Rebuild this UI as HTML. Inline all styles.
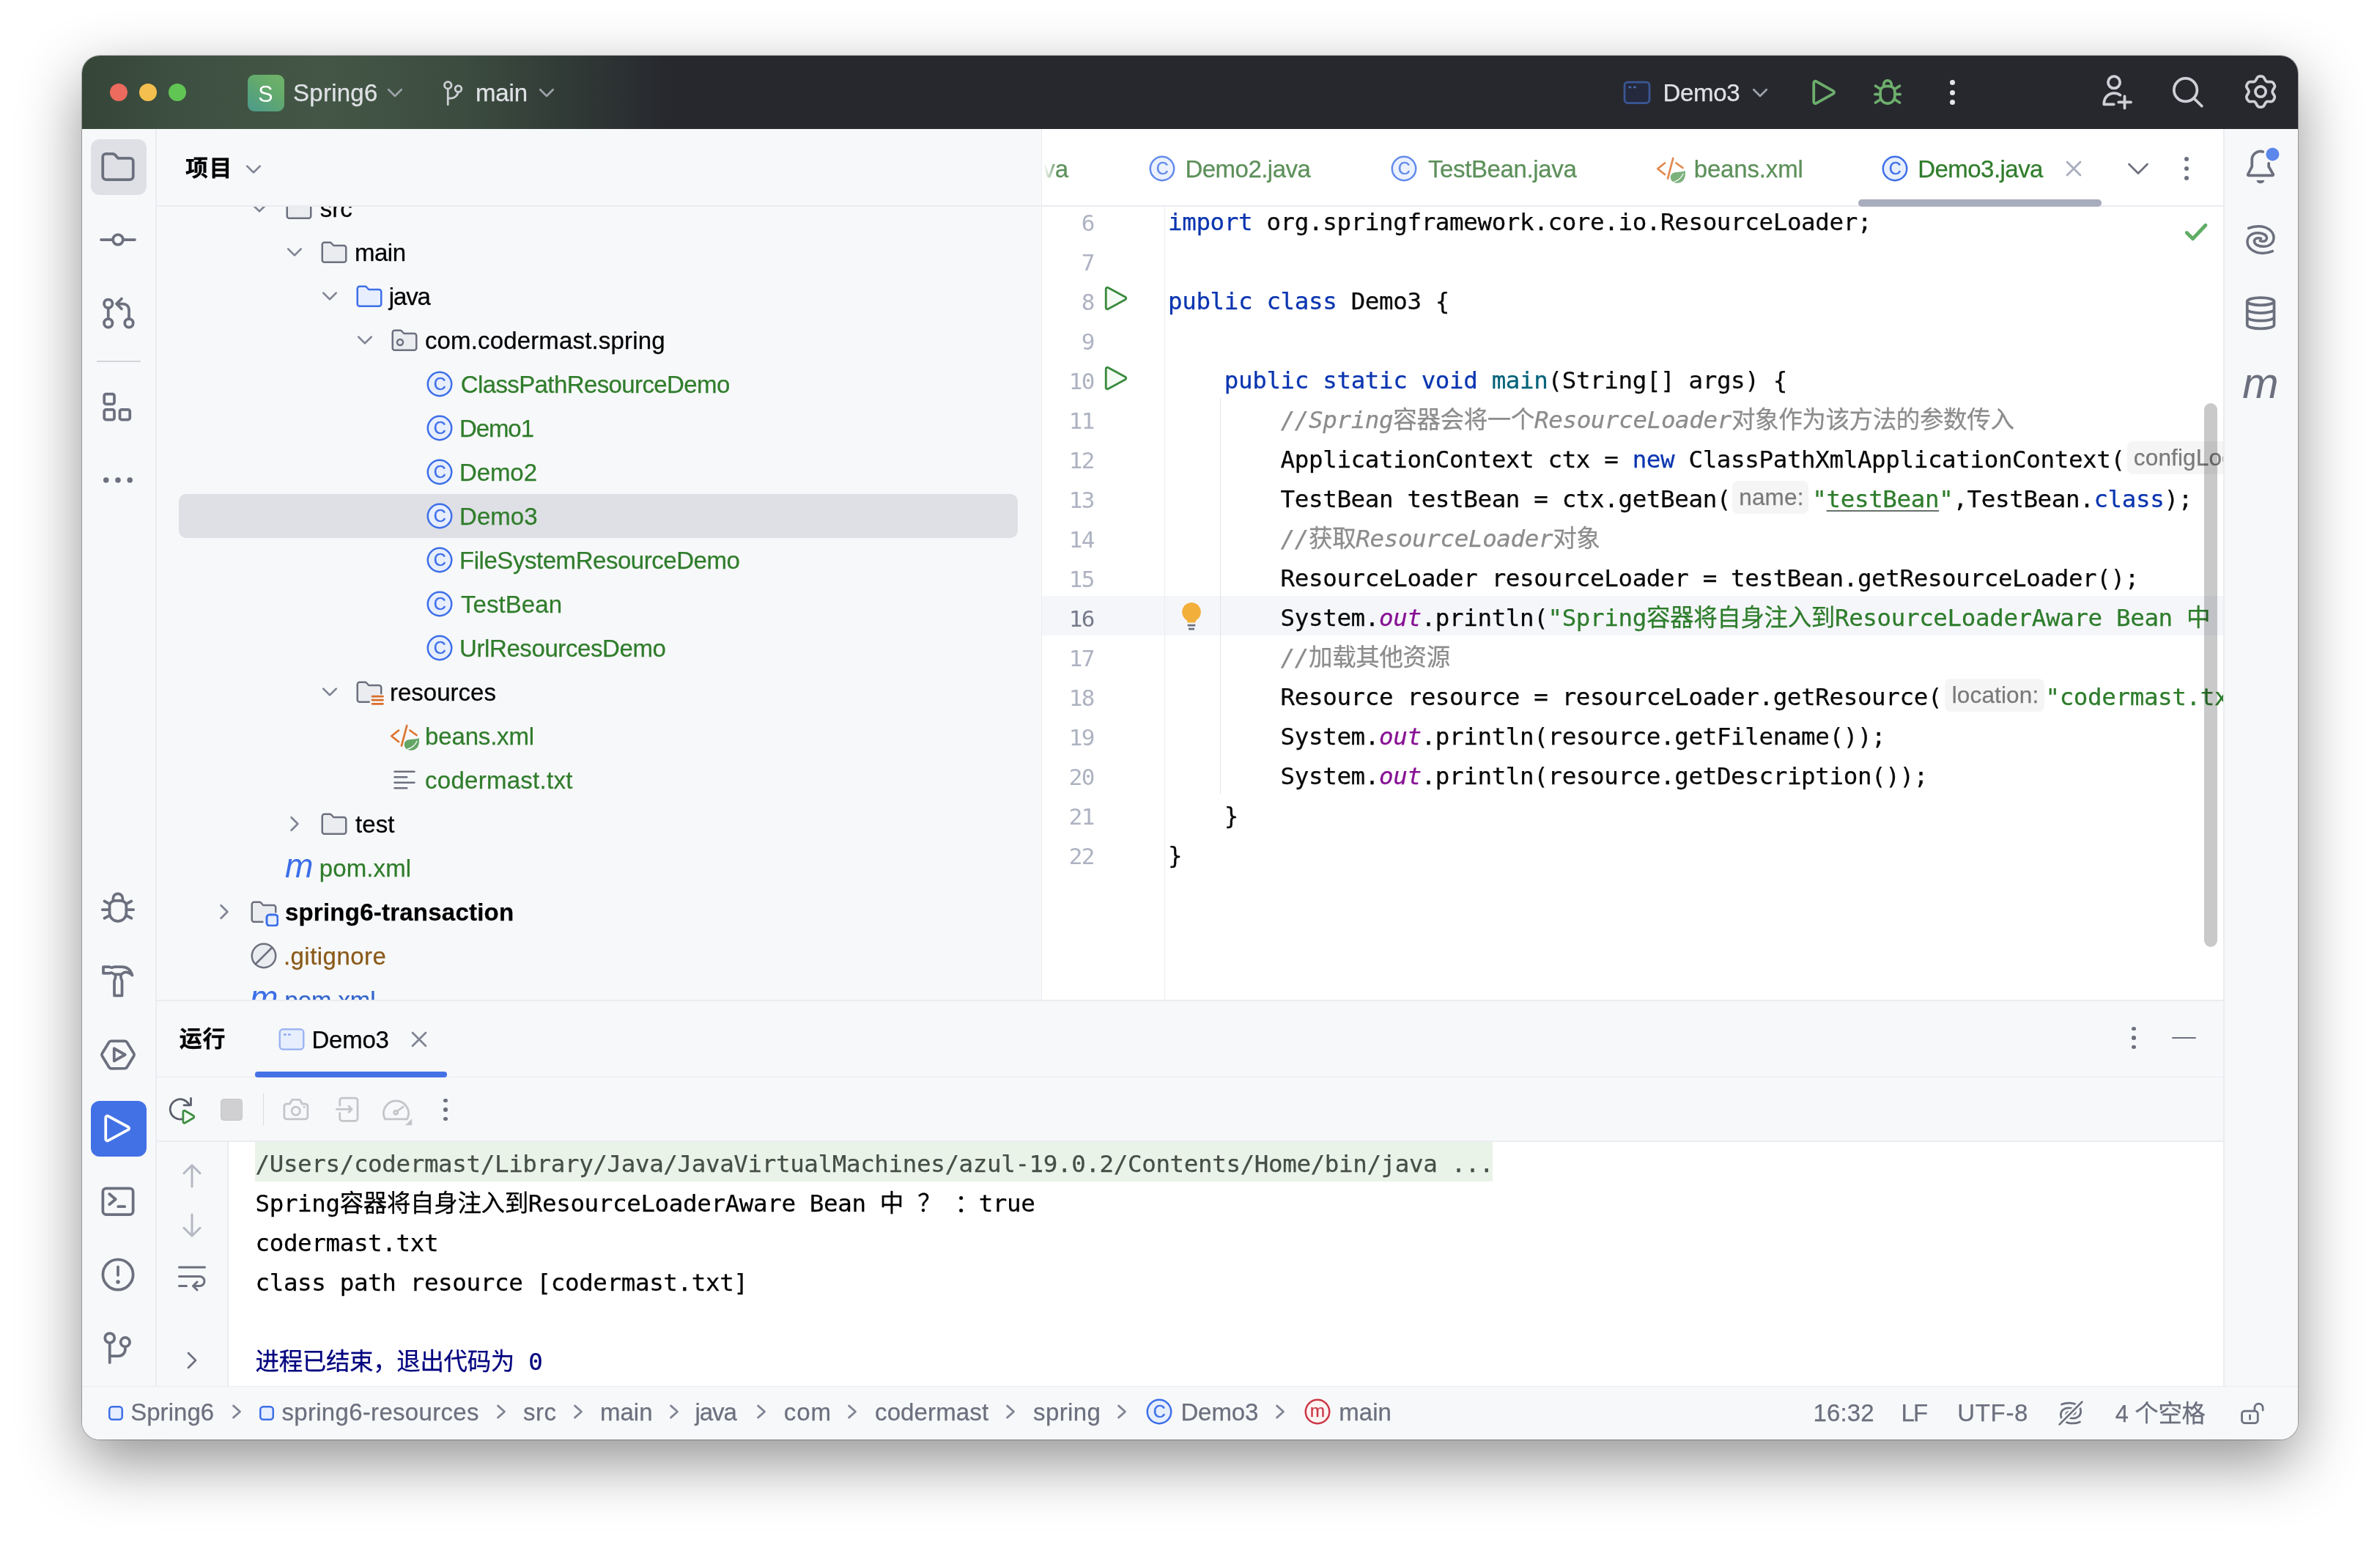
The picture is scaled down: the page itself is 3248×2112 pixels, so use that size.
<!DOCTYPE html><html lang="zh"><head><meta charset="utf-8"><title>Spring6 – Demo3.java</title><style>
html,body{margin:0;padding:0}
body{width:3248px;height:2112px;background:#fff;position:relative;overflow:hidden;font-family:"Liberation Sans","Noto Sans CJK SC",sans-serif;}
#shadow{position:absolute;left:112px;top:76px;width:3024px;height:1888px;border-radius:24px;box-shadow:0 0 0 1px rgba(0,0,0,.26),0 30px 84px rgba(0,0,0,.43);}
#win{position:absolute;left:112px;top:76px;width:3024px;height:1888px;border-radius:24px;overflow:hidden;}
#win>.in{left:-112px;top:-76px;will-change:transform;}
.in{position:absolute;width:3248px;height:2112px;}
.in>div,.in>svg,.in>span{position:absolute;}
.clip{overflow:hidden;}
.t{white-space:nowrap;line-height:60px;height:60px;-webkit-text-stroke:0.25px;}
.hint{display:inline-block;box-sizing:border-box;height:45.5px;line-height:45.5px;vertical-align:3.2px;background:#F5F5F5;border-radius:8px;color:#7A7A7A;font-family:"Liberation Sans","Noto Sans CJK SC",sans-serif;font-size:31.5px;letter-spacing:0.15px;font-style:normal;padding-left:9.3px;white-space:nowrap;}
</style></head><body><div id="shadow"></div><div id="win"><div class="in"><div style="left:112px;top:76px;width:3024px;height:100px;background:linear-gradient(90deg,#354538 0px,#3d4f40 120px,#445746 330px,#3c4c3f 520px,#2f3835 680px,#27282e 800px,#27282e 100%);"></div><div style="left:150px;top:114px;width:24px;height:24px;background:#ED6A5E;border-radius:12px;"></div><div style="left:190px;top:114px;width:24px;height:24px;background:#F5BF4F;border-radius:12px;"></div><div style="left:230px;top:114px;width:24px;height:24px;background:#61C554;border-radius:12px;"></div><div style="left:338px;top:101.5px;width:50px;height:50px;border-radius:9px;background:linear-gradient(35deg,#4b9a8d,#63aa6c 60%,#72b368);"></div><span class="t" style="top:97.73px;font-size:30.5px;color:#fff;left:352.30px;-webkit-text-stroke:0;">S</span><span class="t" style="letter-spacing:0.267px;top:96.57px;font-size:33px;color:#DFE1E5;left:400.00px;">Spring6</span><span class="t" style="letter-spacing:-0.133px;top:96.57px;font-size:33px;color:#DFE1E5;left:649.00px;">main</span><span class="t" style="letter-spacing:-0.300px;top:96.57px;font-size:33px;color:#DFE1E5;left:2269.50px;">Demo3</span><div style="left:112px;top:176px;width:3024px;height:1788px;background:#F7F8FA;"></div><div style="left:1422px;top:176px;width:1612px;height:1188px;background:#fff;"></div><div style="left:311px;top:1557px;width:2723px;height:334px;background:#fff;"></div><div style="left:212px;top:176px;width:1.5px;height:1715px;background:#EBECF0;"></div><div style="left:3034px;top:176px;width:1.5px;height:1715px;background:#EBECF0;"></div><div style="left:1420.5px;top:176px;width:1.5px;height:1188px;background:#EBECF0;"></div><div style="left:213px;top:280px;width:1208px;height:1.5px;background:#EBECF0;"></div><div style="left:1422px;top:280px;width:1612px;height:1.5px;background:#EBECF0;"></div><div style="left:213px;top:1364px;width:2821px;height:1.5px;background:#EBECF0;"></div><div style="left:213px;top:1468.5px;width:2821px;height:1.5px;background:#EBECF0;"></div><div style="left:213px;top:1556px;width:2821px;height:1.5px;background:#EBECF0;"></div><div style="left:310px;top:1557px;width:1.5px;height:334px;background:#EBECF0;"></div><div style="left:112px;top:1890.5px;width:3024px;height:1.5px;background:#EBECF0;"></div><div style="left:124px;top:190px;width:76px;height:76px;background:#DFE0E6;border-radius:12px;"></div><svg style="left:136.3px;top:203px;" width="50" height="50" viewBox="0 0 20 20" fill="none"><g stroke="#6C707E" stroke-width="1.5" stroke-linecap="round" stroke-linejoin="round"><path d="M1.7 4.4a1.7 1.7 0 0 1 1.7-1.7h3.7a1.7 1.7 0 0 1 1.25.55l1.65 1.85h6.6a1.7 1.7 0 0 1 1.7 1.7v8.3a1.7 1.7 0 0 1-1.7 1.7H3.4a1.7 1.7 0 0 1-1.7-1.7z"/></g></svg><svg style="left:136.3px;top:302px;" width="50" height="50" viewBox="0 0 20 20" fill="none"><g stroke="#6C707E" stroke-width="1.5" stroke-linecap="round" stroke-linejoin="round"><circle cx="10" cy="10" r="2.75"/><path d="M0.8 10H7.2M12.8 10H19.2"/></g></svg><svg style="left:136.3px;top:401.6px;" width="50" height="50" viewBox="0 0 20 20" fill="none"><g stroke="#6C707E" stroke-width="1.5" stroke-linecap="round" stroke-linejoin="round"><circle cx="4.7" cy="4.9" r="2.3"/><circle cx="4.7" cy="15.5" r="2.3"/><circle cx="16" cy="15.5" r="2.3"/><path d="M4.7 7.3v5.8M16 13.1V8.2a3.2 3.2 0 0 0-3.2-3.2H9.4M12 2.2L9.2 5l2.800 2.800"/></g></svg><div style="left:132px;top:491.5px;width:60px;height:2px;background:#D3D5DB;"></div><svg style="left:136.3px;top:530px;" width="50" height="50" viewBox="0 0 20 20" fill="none"><g stroke="#6C707E" stroke-width="1.5" stroke-linecap="round" stroke-linejoin="round"><rect x="2.5" y="3" width="5.5" height="5.5" rx="1"/><rect x="2.5" y="11.5" width="5.5" height="5.5" rx="1"/><rect x="11" y="11.5" width="5.5" height="5.5" rx="1"/></g></svg><svg style="left:136.3px;top:629.5px;" width="50" height="50" viewBox="0 0 20 20" fill="none"><g stroke="#6C707E" stroke-width="1.5" stroke-linecap="round" stroke-linejoin="round"><g fill="#6C707E" stroke="none"><circle cx="3.5" cy="10" r="1.5"/><circle cx="10" cy="10" r="1.5"/><circle cx="16.5" cy="10" r="1.5"/></g></g></svg><svg style="left:136.2px;top:1213.2px;" width="50" height="50" viewBox="0 0 20 20" fill="none"><g stroke="#6C707E" stroke-width="1.5" stroke-linecap="round" stroke-linejoin="round"><path d="M5.4 9.300a3 3 0 0 1 3-3h3.150a3 3 0 0 1 3 3v3.650a4.575 4.575 0 0 1-9.150 0z"/><path d="M7.350 6.300V5.100a2.600 2.600 0 0 1 5.200 0v1.200"/><path d="M5.400 11.200H1.500M14.550 11.200h3.900M5.400 8.100L2.600 6.600M14.550 8.100l2.800-1.500M5.400 14.400l-2.800 1.500M14.550 14.400l2.800 1.500"/></g></svg><svg style="left:136.3px;top:1313.5px;" width="50" height="50" viewBox="0 0 20 20" fill="none"><g stroke="#6C707E" stroke-width="1.5" stroke-linecap="round" stroke-linejoin="round"><path d="M2 2.050h3.200c.5 0 .7.400 1.300.400s.9-.400 1.600-.400H12c3 0 5 1.800 5.800 4.600-1.300-1.200-3-1.900-4.300-1.600-.9.200-1.200 1.100-2 1.100H8.300c-.8 0-1-.9-2-.9-.5 0-.7.300-1.100.300H2z"/><path d="M8.600 6.300v1.500c0 .8-.6 1.200-.6 2.200v7.700h4.200V10c0-1-.6-1.400-.6-2.200V6.300"/></g></svg><svg style="left:136px;top:1413.9px;" width="50" height="50" viewBox="0 0 20 20" fill="none"><g stroke="#6C707E" stroke-width="1.5" stroke-linecap="round" stroke-linejoin="round"><path d="M6.300 2.500h7.400a1.400 1.400 0 0 1 1.200.7l3.750 6.100a1.400 1.400 0 0 1 0 1.400l-3.750 6.100a1.400 1.400 0 0 1-1.200.7H6.300a1.400 1.400 0 0 1-1.200-.7L1.350 10.700a1.400 1.400 0 0 1 0-1.400L5.100 3.200a1.400 1.400 0 0 1 1.200-.7z"/><path d="M7.900 6.600v6.800l6-3.400z"/></g></svg><div style="left:124px;top:1502px;width:76px;height:76px;background:#4271E5;border-radius:12px;"></div><svg style="left:136.3px;top:1515px;" width="50" height="50" viewBox="0 0 20 20" fill="none"><g stroke="#fff" stroke-width="1.5" stroke-linecap="round" stroke-linejoin="round"><path d="M3.300 3.900v11.800a.9.9 0 0 0 1.350.78l10.900-5.900a.9.9 0 0 0 0-1.580L4.650 3.100a.9.9 0 0 0-1.350.8z"/></g></svg><svg style="left:136.3px;top:1613.5px;" width="50" height="50" viewBox="0 0 20 20" fill="none"><g stroke="#6C707E" stroke-width="1.5" stroke-linecap="round" stroke-linejoin="round"><rect x="1.750" y="2.950" width="16.500" height="14.250" rx="1.800"/><path d="M5.300 6l3.400 2.900-3.400 2.800M10.100 12.850h3.600"/></g></svg><svg style="left:136.3px;top:1713.6px;" width="50" height="50" viewBox="0 0 20 20" fill="none"><g stroke="#6C707E" stroke-width="1.5" stroke-linecap="round" stroke-linejoin="round"><circle cx="10" cy="10" r="8.25"/><path d="M10 5.700v4.600"/><circle cx="10" cy="14" r="1.100" fill="#6C707E" stroke="none"/></g></svg><svg style="left:136.3px;top:1813.5px;" width="50" height="50" viewBox="0 0 20 20" fill="none"><g stroke="#6C707E" stroke-width="1.5" stroke-linecap="round" stroke-linejoin="round"><circle cx="5.500" cy="4.600" r="2.600"/><circle cx="13.950" cy="6.850" r="2.500"/><path d="M5.500 7.300v10.700M13.950 9.450v1.350a3.600 3.600 0 0 1-3.600 3.600H5.500"/></g></svg><span class="t" style="letter-spacing:1.600px;top:200.06px;font-size:31px;color:#000;left:253.00px;font-weight:700;">项目</span><svg style="left:326px;top:211px;" width="40" height="40" viewBox="0 0 16 16" fill="none"><g stroke="#818594" stroke-width="1.1" stroke-linecap="round" stroke-linejoin="round"><path d="M4.5 6.25L8 9.75l3.5-3.5"/></g></svg><div class="clip" style="left:213px;top:281.5px;width:1207.5px;height:1082.5px"><div class="in" style="left:-213px;top:-281.5px"><div style="left:244px;top:674px;width:1145px;height:60px;background:#DFE0E5;border-radius:10px;"></div><svg style="left:334px;top:264px;" width="40" height="40" viewBox="0 0 16 16" fill="none"><g stroke="#818594" stroke-width="1.1" stroke-linecap="round" stroke-linejoin="round"><path d="M4.5 6.25L8 9.75l3.5-3.5"/></g></svg><svg style="left:388px;top:264px;" width="40" height="40" viewBox="0 0 16 16" fill="none"><g stroke="#6C707E" stroke-width="1" stroke-linecap="round" stroke-linejoin="round"><path fill="#EBECF0" stroke="#6C707E" d="M1.5 3.9a1.2 1.2 0 0 1 1.2-1.2h2.9a1.2 1.2 0 0 1 .9.4l1.2 1.3h5.6a1.2 1.2 0 0 1 1.2 1.2v6.7a1.2 1.2 0 0 1-1.2 1.2H2.7a1.2 1.2 0 0 1-1.2-1.2z"/></g></svg><span class="t" style="letter-spacing:0.000px;top:254.77px;font-size:33px;color:#000;left:436.70px;">src</span><svg style="left:382px;top:324px;" width="40" height="40" viewBox="0 0 16 16" fill="none"><g stroke="#818594" stroke-width="1.1" stroke-linecap="round" stroke-linejoin="round"><path d="M4.5 6.25L8 9.75l3.5-3.5"/></g></svg><svg style="left:436px;top:324px;" width="40" height="40" viewBox="0 0 16 16" fill="none"><g stroke="#6C707E" stroke-width="1" stroke-linecap="round" stroke-linejoin="round"><path fill="#EBECF0" stroke="#6C707E" d="M1.5 3.9a1.2 1.2 0 0 1 1.2-1.2h2.9a1.2 1.2 0 0 1 .9.4l1.2 1.3h5.6a1.2 1.2 0 0 1 1.2 1.2v6.7a1.2 1.2 0 0 1-1.2 1.2H2.7a1.2 1.2 0 0 1-1.2-1.2z"/></g></svg><span class="t" style="letter-spacing:-0.467px;top:314.77px;font-size:33px;color:#000;left:483.90px;">main</span><svg style="left:430px;top:384px;" width="40" height="40" viewBox="0 0 16 16" fill="none"><g stroke="#818594" stroke-width="1.1" stroke-linecap="round" stroke-linejoin="round"><path d="M4.5 6.25L8 9.75l3.5-3.5"/></g></svg><svg style="left:484px;top:384px;" width="40" height="40" viewBox="0 0 16 16" fill="none"><g stroke="#6C707E" stroke-width="1" stroke-linecap="round" stroke-linejoin="round"><path fill="#E7EEFD" stroke="#3D6FE8" d="M1.5 3.9a1.2 1.2 0 0 1 1.2-1.2h2.9a1.2 1.2 0 0 1 .9.4l1.2 1.3h5.6a1.2 1.2 0 0 1 1.2 1.2v6.7a1.2 1.2 0 0 1-1.2 1.2H2.7a1.2 1.2 0 0 1-1.2-1.2z"/></g></svg><span class="t" style="letter-spacing:-1.133px;top:374.77px;font-size:33px;color:#000;left:530.80px;">java</span><svg style="left:478px;top:444px;" width="40" height="40" viewBox="0 0 16 16" fill="none"><g stroke="#818594" stroke-width="1.1" stroke-linecap="round" stroke-linejoin="round"><path d="M4.5 6.25L8 9.75l3.5-3.5"/></g></svg><svg style="left:532px;top:444px;" width="40" height="40" viewBox="0 0 16 16" fill="none"><g stroke="#6C707E" stroke-width="1" stroke-linecap="round" stroke-linejoin="round"><path fill="#EBECF0" stroke="#6C707E" d="M1.5 3.9a1.2 1.2 0 0 1 1.2-1.2h2.9a1.2 1.2 0 0 1 .9.4l1.2 1.3h5.6a1.2 1.2 0 0 1 1.2 1.2v6.7a1.2 1.2 0 0 1-1.2 1.2H2.7a1.2 1.2 0 0 1-1.2-1.2z"/><circle cx="5.6" cy="9.2" r="1.6"/></g></svg><span class="t" style="letter-spacing:0.158px;top:434.77px;font-size:33px;color:#000;left:579.90px;">com.codermast.spring</span><svg style="left:580px;top:504px;" width="40" height="40" viewBox="0 0 16 16" fill="none"><g stroke="#6C707E" stroke-width="1" stroke-linecap="round" stroke-linejoin="round"><circle cx="8" cy="8" r="6.5" fill="#E7EEFD" stroke="#3D6FE8"/><text x="8.05" y="11.35" text-anchor="middle" font-family="Liberation Sans,sans-serif" font-size="9.4" fill="#3D6FE8" stroke="#3D6FE8" stroke-width=".12">C</text></g></svg><span class="t" style="letter-spacing:-0.600px;top:494.77px;font-size:33px;color:#307D2C;left:628.70px;">ClassPathResourceDemo</span><svg style="left:580px;top:564px;" width="40" height="40" viewBox="0 0 16 16" fill="none"><g stroke="#6C707E" stroke-width="1" stroke-linecap="round" stroke-linejoin="round"><circle cx="8" cy="8" r="6.5" fill="#E7EEFD" stroke="#3D6FE8"/><text x="8.05" y="11.35" text-anchor="middle" font-family="Liberation Sans,sans-serif" font-size="9.4" fill="#3D6FE8" stroke="#3D6FE8" stroke-width=".12">C</text></g></svg><span class="t" style="letter-spacing:-1.100px;top:554.77px;font-size:33px;color:#307D2C;left:627.00px;">Demo1</span><svg style="left:580px;top:624px;" width="40" height="40" viewBox="0 0 16 16" fill="none"><g stroke="#6C707E" stroke-width="1" stroke-linecap="round" stroke-linejoin="round"><circle cx="8" cy="8" r="6.5" fill="#E7EEFD" stroke="#3D6FE8"/><text x="8.05" y="11.35" text-anchor="middle" font-family="Liberation Sans,sans-serif" font-size="9.4" fill="#3D6FE8" stroke="#3D6FE8" stroke-width=".12">C</text></g></svg><span class="t" style="letter-spacing:-0.100px;top:614.77px;font-size:33px;color:#307D2C;left:627.00px;">Demo2</span><svg style="left:580px;top:684px;" width="40" height="40" viewBox="0 0 16 16" fill="none"><g stroke="#6C707E" stroke-width="1" stroke-linecap="round" stroke-linejoin="round"><circle cx="8" cy="8" r="6.5" fill="#E7EEFD" stroke="#3D6FE8"/><text x="8.05" y="11.35" text-anchor="middle" font-family="Liberation Sans,sans-serif" font-size="9.4" fill="#3D6FE8" stroke="#3D6FE8" stroke-width=".12">C</text></g></svg><span class="t" style="letter-spacing:0.050px;top:674.77px;font-size:33px;color:#307D2C;left:627.00px;">Demo3</span><svg style="left:580px;top:744px;" width="40" height="40" viewBox="0 0 16 16" fill="none"><g stroke="#6C707E" stroke-width="1" stroke-linecap="round" stroke-linejoin="round"><circle cx="8" cy="8" r="6.5" fill="#E7EEFD" stroke="#3D6FE8"/><text x="8.05" y="11.35" text-anchor="middle" font-family="Liberation Sans,sans-serif" font-size="9.4" fill="#3D6FE8" stroke="#3D6FE8" stroke-width=".12">C</text></g></svg><span class="t" style="letter-spacing:-0.457px;top:734.77px;font-size:33px;color:#307D2C;left:627.00px;">FileSystemResourceDemo</span><svg style="left:580px;top:804px;" width="40" height="40" viewBox="0 0 16 16" fill="none"><g stroke="#6C707E" stroke-width="1" stroke-linecap="round" stroke-linejoin="round"><circle cx="8" cy="8" r="6.5" fill="#E7EEFD" stroke="#3D6FE8"/><text x="8.05" y="11.35" text-anchor="middle" font-family="Liberation Sans,sans-serif" font-size="9.4" fill="#3D6FE8" stroke="#3D6FE8" stroke-width=".12">C</text></g></svg><span class="t" style="letter-spacing:0.057px;top:794.77px;font-size:33px;color:#307D2C;left:629.00px;">TestBean</span><svg style="left:580px;top:864px;" width="40" height="40" viewBox="0 0 16 16" fill="none"><g stroke="#6C707E" stroke-width="1" stroke-linecap="round" stroke-linejoin="round"><circle cx="8" cy="8" r="6.5" fill="#E7EEFD" stroke="#3D6FE8"/><text x="8.05" y="11.35" text-anchor="middle" font-family="Liberation Sans,sans-serif" font-size="9.4" fill="#3D6FE8" stroke="#3D6FE8" stroke-width=".12">C</text></g></svg><span class="t" style="letter-spacing:-0.400px;top:854.77px;font-size:33px;color:#307D2C;left:627.00px;">UrlResourcesDemo</span><svg style="left:430px;top:924px;" width="40" height="40" viewBox="0 0 16 16" fill="none"><g stroke="#818594" stroke-width="1.1" stroke-linecap="round" stroke-linejoin="round"><path d="M4.5 6.25L8 9.75l3.5-3.5"/></g></svg><svg style="left:484px;top:924px;" width="40" height="40" viewBox="0 0 16 16" fill="none"><g stroke="#6C707E" stroke-width="1" stroke-linecap="round" stroke-linejoin="round"><path fill="#EBECF0" stroke="#6C707E" d="M7.900 13.500H2.700a1.200 1.200 0 0 1-1.200-1.200V3.900a1.200 1.200 0 0 1 1.200-1.200h2.900a1.200 1.200 0 0 1 .9.4l1.200 1.300h5.600a1.200 1.200 0 0 1 1.200 1.200v3.300"/><path stroke="#DA6E2B" stroke-width="1.1" d="M9.600 10.400h5.800M9.600 12.450h5.800M9.600 14.500h5.800"/></g></svg><span class="t" style="letter-spacing:0.025px;top:914.77px;font-size:33px;color:#000;left:531.90px;">resources</span><svg style="left:532px;top:984px;" width="40" height="40" viewBox="0 0 16 16" fill="none"><g stroke="#6C707E" stroke-width="1" stroke-linecap="round" stroke-linejoin="round"><path stroke="#DD742F" stroke-width="1.1" d="M4.800 5L0.900 8.100l3.900 3.100M11 5l3.600 2.600M9.300 2.400L6.400 13.400"/><path fill="#64A566" stroke="none" d="M15.900 9.200c.5 3.500-.8 6.700-4.400 6.700-2 0-3.600-1.300-3.600-3.100 0-2 1.700-2.800 3.700-2.900 1.800-.1 3.300-.2 4.300-.7z"/><path stroke="#F2F6F2" stroke-width=".55" fill="none" d="M9.600 15.300c2.200-.6 4.200-2.200 5.200-4.400"/></g></svg><span class="t" style="letter-spacing:-0.175px;top:974.77px;font-size:33px;color:#307D2C;left:580.10px;">beans.xml</span><svg style="left:532px;top:1044px;" width="40" height="40" viewBox="0 0 16 16" fill="none"><g stroke="#6C707E" stroke-width="1" stroke-linecap="round" stroke-linejoin="round"><path d="M2.600 3.500H13.400M2.600 6.500H9.300M2.600 9.500H13.400M2.600 12.500H9.300"/></g></svg><span class="t" style="letter-spacing:0.267px;top:1034.77px;font-size:33px;color:#307D2C;left:580.10px;">codermast.txt</span><svg style="left:382px;top:1104px;" width="40" height="40" viewBox="0 0 16 16" fill="none"><g stroke="#818594" stroke-width="1.1" stroke-linecap="round" stroke-linejoin="round"><path d="M6.25 4.5L9.75 8l-3.5 3.5"/></g></svg><svg style="left:436px;top:1104px;" width="40" height="40" viewBox="0 0 16 16" fill="none"><g stroke="#6C707E" stroke-width="1" stroke-linecap="round" stroke-linejoin="round"><path fill="#EBECF0" stroke="#6C707E" d="M1.5 3.9a1.2 1.2 0 0 1 1.2-1.2h2.9a1.2 1.2 0 0 1 .9.4l1.2 1.3h5.6a1.2 1.2 0 0 1 1.2 1.2v6.7a1.2 1.2 0 0 1-1.2 1.2H2.7a1.2 1.2 0 0 1-1.2-1.2z"/></g></svg><span class="t" style="letter-spacing:0.133px;top:1094.77px;font-size:33px;color:#000;left:484.90px;">test</span><svg style="left:388.3px;top:1163.8px;" width="40" height="40" viewBox="0 0 16 16" fill="none"><text x="8.100" y="13.150" text-anchor="middle" font-family="Liberation Sans,sans-serif" font-style="italic" font-size="18.600" textLength="15.4" lengthAdjust="spacingAndGlyphs" fill="#3D6FE8" stroke="none">m</text></svg><span class="t" style="letter-spacing:0.133px;top:1154.77px;font-size:33px;color:#307D2C;left:435.70px;">pom.xml</span><svg style="left:286px;top:1224px;" width="40" height="40" viewBox="0 0 16 16" fill="none"><g stroke="#818594" stroke-width="1.1" stroke-linecap="round" stroke-linejoin="round"><path d="M6.25 4.5L9.75 8l-3.5 3.5"/></g></svg><svg style="left:340px;top:1224px;" width="40" height="40" viewBox="0 0 16 16" fill="none"><g stroke="#6C707E" stroke-width="1" stroke-linecap="round" stroke-linejoin="round"><path fill="#EBECF0" stroke="#6C707E" d="M7.4 13.5H2.7a1.2 1.2 0 0 1-1.2-1.2V3.9a1.2 1.2 0 0 1 1.2-1.2h2.9a1.2 1.2 0 0 1 .9.4l1.2 1.3h5.6a1.2 1.2 0 0 1 1.2 1.2v2.6"/><rect x="9.6" y="9.6" width="6" height="6" rx="1.5" fill="#E7EEFD" stroke="#3D6FE8" stroke-width="1.2"/></g></svg><span class="t" style="letter-spacing:0.233px;top:1214.77px;font-size:33px;color:#000;left:388.90px;font-weight:700;">spring6-transaction</span><svg style="left:340px;top:1284px;" width="40" height="40" viewBox="0 0 16 16" fill="none"><g stroke="#6C707E" stroke-width="1" stroke-linecap="round" stroke-linejoin="round"><circle cx="8" cy="8" r="6.5" fill="#EBECF0"/><path d="M3.5 12.5l9-9"/></g></svg><span class="t" style="letter-spacing:0.467px;top:1274.77px;font-size:33px;color:#8A5A18;left:386.90px;">.gitignore</span><svg style="left:340.3px;top:1343.8px;" width="40" height="40" viewBox="0 0 16 16" fill="none"><text x="8.100" y="13.150" text-anchor="middle" font-family="Liberation Sans,sans-serif" font-style="italic" font-size="18.600" textLength="15.4" lengthAdjust="spacingAndGlyphs" fill="#3D6FE8" stroke="none">m</text></svg><span class="t" style="top:1334.77px;font-size:33px;color:#3366CC;left:388.50px;letter-spacing:-0.1px;">pom.xml</span></div></div><div class="clip" style="left:1422px;top:177px;width:1612px;height:103px"><div class="in" style="left:-1422px;top:-177px"><span class="t" style="top:200.87px;font-size:33px;color:#5D905A;right:1790.00px;">Demo1.java</span><div style="left:1422px;top:190px;width:21px;height:80px;background:linear-gradient(90deg,#fff 12%,rgba(255,255,255,0) 100%);"></div></div></div><svg style="left:1566px;top:209.7px;opacity:.8;" width="40" height="40" viewBox="0 0 16 16" fill="none"><g stroke="#6C707E" stroke-width="1" stroke-linecap="round" stroke-linejoin="round"><circle cx="8" cy="8" r="6.5" fill="#E7EEFD" stroke="#3D6FE8"/><text x="8.05" y="11.35" text-anchor="middle" font-family="Liberation Sans,sans-serif" font-size="9.4" fill="#3D6FE8" stroke="#3D6FE8" stroke-width=".12">C</text></g></svg><span class="t" style="letter-spacing:-0.533px;top:200.87px;font-size:33px;color:#5D905A;left:1617.50px;">Demo2.java</span><svg style="left:1896px;top:209.7px;opacity:.8;" width="40" height="40" viewBox="0 0 16 16" fill="none"><g stroke="#6C707E" stroke-width="1" stroke-linecap="round" stroke-linejoin="round"><circle cx="8" cy="8" r="6.5" fill="#E7EEFD" stroke="#3D6FE8"/><text x="8.05" y="11.35" text-anchor="middle" font-family="Liberation Sans,sans-serif" font-size="9.4" fill="#3D6FE8" stroke="#3D6FE8" stroke-width=".12">C</text></g></svg><span class="t" style="letter-spacing:-0.367px;top:200.87px;font-size:33px;color:#5D905A;left:1948.90px;">TestBean.java</span><svg style="left:2260px;top:209.5px;opacity:.85;" width="40" height="40" viewBox="0 0 16 16" fill="none"><g stroke="#6C707E" stroke-width="1" stroke-linecap="round" stroke-linejoin="round"><path stroke="#DD742F" stroke-width="1.1" d="M4.800 5L0.900 8.100l3.900 3.100M11 5l3.600 2.600M9.300 2.400L6.400 13.400"/><path fill="#64A566" stroke="none" d="M15.900 9.200c.5 3.500-.8 6.700-4.400 6.700-2 0-3.600-1.300-3.600-3.100 0-2 1.700-2.800 3.700-2.900 1.800-.1 3.300-.2 4.300-.7z"/><path stroke="#F2F6F2" stroke-width=".55" fill="none" d="M9.600 15.300c2.200-.6 4.200-2.200 5.200-4.400"/></g></svg><span class="t" style="letter-spacing:-0.150px;top:200.87px;font-size:33px;color:#5D905A;left:2311.70px;">beans.xml</span><svg style="left:2566px;top:209.7px;" width="40" height="40" viewBox="0 0 16 16" fill="none"><g stroke="#6C707E" stroke-width="1" stroke-linecap="round" stroke-linejoin="round"><circle cx="8" cy="8" r="6.5" fill="#E7EEFD" stroke="#3D6FE8"/><text x="8.05" y="11.35" text-anchor="middle" font-family="Liberation Sans,sans-serif" font-size="9.4" fill="#3D6FE8" stroke="#3D6FE8" stroke-width=".12">C</text></g></svg><span class="t" style="letter-spacing:-0.533px;top:200.87px;font-size:33px;color:#307D2C;left:2617.20px;">Demo3.java</span><svg style="left:2810px;top:210px;" width="40" height="40" viewBox="0 0 16 16" fill="none"><g stroke="#A8ADBD" stroke-width="1.1" stroke-linecap="round" stroke-linejoin="round"><path d="M4.4 4.4l7.2 7.2M11.6 4.4l-7.2 7.2"/></g></svg><div style="left:2536px;top:272px;width:332px;height:9.5px;background:#A8ADBD;border-radius:4.75px;"></div><svg style="left:2898px;top:210px;" width="40" height="40" viewBox="0 0 16 16" fill="none"><path stroke="#6C707E" stroke-width="1.1" stroke-linecap="round" stroke-linejoin="round" d="M3 5.6l5 5 5-5"/></svg><div style="left:2981px;top:214.4px;width:6px;height:6px;background:#6C707E;border-radius:3px;"></div><div style="left:2981px;top:227px;width:6px;height:6px;background:#6C707E;border-radius:3px;"></div><div style="left:2981px;top:239.8px;width:6px;height:6px;background:#6C707E;border-radius:3px;"></div><div class="clip" style="left:1422px;top:281.5px;width:1612px;height:1082.5px"><div class="in" style="left:-1422px;top:-281.5px"><div style="left:1422px;top:813px;width:1612px;height:54px;background:#F5F6FA;"></div><div style="left:1588.5px;top:281px;width:1.5px;height:1084px;background:#EBECF0;"></div><div style="left:1664.5px;top:543px;width:1.5px;height:540px;background:#E3E4E9;"></div><span class="t" style="top:273.57px;font-size:31px;color:#AEB3C2;right:1755.00px;font-family:'DejaVu Sans Mono','Liberation Mono','Noto Sans CJK SC',monospace;letter-spacing:-1.5px;-webkit-text-stroke:0;">6</span><span class="t" style="top:327.57px;font-size:31px;color:#AEB3C2;right:1755.00px;font-family:'DejaVu Sans Mono','Liberation Mono','Noto Sans CJK SC',monospace;letter-spacing:-1.5px;-webkit-text-stroke:0;">7</span><span class="t" style="top:381.57px;font-size:31px;color:#AEB3C2;right:1755.00px;font-family:'DejaVu Sans Mono','Liberation Mono','Noto Sans CJK SC',monospace;letter-spacing:-1.5px;-webkit-text-stroke:0;">8</span><span class="t" style="top:435.57px;font-size:31px;color:#AEB3C2;right:1755.00px;font-family:'DejaVu Sans Mono','Liberation Mono','Noto Sans CJK SC',monospace;letter-spacing:-1.5px;-webkit-text-stroke:0;">9</span><span class="t" style="top:489.57px;font-size:31px;color:#AEB3C2;right:1755.00px;font-family:'DejaVu Sans Mono','Liberation Mono','Noto Sans CJK SC',monospace;letter-spacing:-1.5px;-webkit-text-stroke:0;">10</span><span class="t" style="top:543.57px;font-size:31px;color:#AEB3C2;right:1755.00px;font-family:'DejaVu Sans Mono','Liberation Mono','Noto Sans CJK SC',monospace;letter-spacing:-1.5px;-webkit-text-stroke:0;">11</span><span class="t" style="top:597.57px;font-size:31px;color:#AEB3C2;right:1755.00px;font-family:'DejaVu Sans Mono','Liberation Mono','Noto Sans CJK SC',monospace;letter-spacing:-1.5px;-webkit-text-stroke:0;">12</span><span class="t" style="top:651.57px;font-size:31px;color:#AEB3C2;right:1755.00px;font-family:'DejaVu Sans Mono','Liberation Mono','Noto Sans CJK SC',monospace;letter-spacing:-1.5px;-webkit-text-stroke:0;">13</span><span class="t" style="top:705.57px;font-size:31px;color:#AEB3C2;right:1755.00px;font-family:'DejaVu Sans Mono','Liberation Mono','Noto Sans CJK SC',monospace;letter-spacing:-1.5px;-webkit-text-stroke:0;">14</span><span class="t" style="top:759.57px;font-size:31px;color:#AEB3C2;right:1755.00px;font-family:'DejaVu Sans Mono','Liberation Mono','Noto Sans CJK SC',monospace;letter-spacing:-1.5px;-webkit-text-stroke:0;">15</span><span class="t" style="top:813.57px;font-size:31px;color:#767A8A;right:1755.00px;font-family:'DejaVu Sans Mono','Liberation Mono','Noto Sans CJK SC',monospace;letter-spacing:-1.5px;-webkit-text-stroke:0;">16</span><span class="t" style="top:867.57px;font-size:31px;color:#AEB3C2;right:1755.00px;font-family:'DejaVu Sans Mono','Liberation Mono','Noto Sans CJK SC',monospace;letter-spacing:-1.5px;-webkit-text-stroke:0;">17</span><span class="t" style="top:921.57px;font-size:31px;color:#AEB3C2;right:1755.00px;font-family:'DejaVu Sans Mono','Liberation Mono','Noto Sans CJK SC',monospace;letter-spacing:-1.5px;-webkit-text-stroke:0;">18</span><span class="t" style="top:975.57px;font-size:31px;color:#AEB3C2;right:1755.00px;font-family:'DejaVu Sans Mono','Liberation Mono','Noto Sans CJK SC',monospace;letter-spacing:-1.5px;-webkit-text-stroke:0;">19</span><span class="t" style="top:1029.57px;font-size:31px;color:#AEB3C2;right:1755.00px;font-family:'DejaVu Sans Mono','Liberation Mono','Noto Sans CJK SC',monospace;letter-spacing:-1.5px;-webkit-text-stroke:0;">20</span><span class="t" style="top:1083.57px;font-size:31px;color:#AEB3C2;right:1755.00px;font-family:'DejaVu Sans Mono','Liberation Mono','Noto Sans CJK SC',monospace;letter-spacing:-1.5px;-webkit-text-stroke:0;">21</span><span class="t" style="top:1137.57px;font-size:31px;color:#AEB3C2;right:1755.00px;font-family:'DejaVu Sans Mono','Liberation Mono','Noto Sans CJK SC',monospace;letter-spacing:-1.5px;-webkit-text-stroke:0;">22</span><svg style="left:1503.3px;top:387.4px;" width="40" height="40" viewBox="0 0 16 16" fill="none"><path fill="#F4FBF4" stroke="#3B8B3F" stroke-width="1.15" stroke-linejoin="round" d="M2.500 2.900V13.100a.8.8 0 0 0 1.200.7l9.400-5.100a.8.8 0 0 0 0-1.400L3.700 2.200a.8.8 0 0 0-1.200.7z"/></svg><svg style="left:1503.3px;top:495.6px;" width="40" height="40" viewBox="0 0 16 16" fill="none"><path fill="#F4FBF4" stroke="#3B8B3F" stroke-width="1.15" stroke-linejoin="round" d="M2.500 2.900V13.100a.8.8 0 0 0 1.200.7l9.400-5.100a.8.8 0 0 0 0-1.400L3.700 2.200a.8.8 0 0 0-1.200.7z"/></svg><svg style="left:1606px;top:819px;" width="40" height="44" viewBox="0 0 16 17.6" fill="none"><path fill="#F2AF3A" d="M8 1.2a5.2 5.2 0 0 0-2.9 9.5c.5.4.8.9.8 1.5h4.2c0-.6.3-1.1.8-1.5A5.2 5.2 0 0 0 8 1.2z"/><path stroke="#6C707E" stroke-width="1.1" d="M5.9 13.6h4.2M6.4 15.6h3.2"/></svg><span class="t" style="top:273.06px;font-size:32.5px;color:#080808;left:1594.00px;font-family:'DejaVu Sans Mono','Liberation Mono','Noto Sans CJK SC',monospace;letter-spacing:-0.365px;white-space:pre;"><span style="color:#0A35B0;">import</span> org.springframework.core.io.ResourceLoader;</span><span class="t" style="top:381.06px;font-size:32.5px;color:#080808;left:1594.00px;font-family:'DejaVu Sans Mono','Liberation Mono','Noto Sans CJK SC',monospace;letter-spacing:-0.365px;white-space:pre;"><span style="color:#0A35B0;">public</span> <span style="color:#0A35B0;">class</span> Demo3 {</span><span class="t" style="top:489.05px;font-size:32.5px;color:#080808;left:1594.00px;font-family:'DejaVu Sans Mono','Liberation Mono','Noto Sans CJK SC',monospace;letter-spacing:-0.365px;white-space:pre;">    <span style="color:#0A35B0;">public</span> <span style="color:#0A35B0;">static</span> <span style="color:#0A35B0;">void</span> <span style="color:#00627A;">main</span>(String[] args) {</span><span class="t" style="top:543.05px;font-size:32.5px;color:#080808;left:1594.00px;font-family:'DejaVu Sans Mono','Liberation Mono','Noto Sans CJK SC',monospace;letter-spacing:-0.365px;white-space:pre;">        <span style="color:#8C8C8C;font-style:italic;">//Spring</span><span style="color:#8C8C8C;">容器会将一个</span><span style="color:#8C8C8C;font-style:italic;">ResourceLoader</span><span style="color:#8C8C8C;">对象作为该方法的参数传入</span></span><span class="t" style="top:597.05px;font-size:32.5px;color:#080808;left:1594.00px;font-family:'DejaVu Sans Mono','Liberation Mono','Noto Sans CJK SC',monospace;letter-spacing:-0.365px;white-space:pre;">        ApplicationContext ctx = <span style="color:#0A35B0;">new</span> ClassPathXmlApplicationContext(<span class="hint" style="width:210px;margin:0 4px 0 2.8px">configLocation:</span><span style="color:#2E7D2C;">"beans.xml"</span>);</span><span class="t" style="top:651.05px;font-size:32.5px;color:#080808;left:1594.00px;font-family:'DejaVu Sans Mono','Liberation Mono','Noto Sans CJK SC',monospace;letter-spacing:-0.365px;white-space:pre;">        TestBean testBean = ctx.getBean(<span class="hint" style="width:104.1px;margin:0 5.3px 0 1.9px">name:</span><span style="color:#2E7D2C;">"</span><span style="color:#2E7D2C;text-decoration:underline;text-decoration-thickness:2px;text-underline-offset:4px;text-decoration-color:#66706a;">testBean</span><span style="color:#2E7D2C;">"</span>,TestBean.<span style="color:#0A35B0;">class</span>);</span><span class="t" style="top:705.05px;font-size:32.5px;color:#080808;left:1594.00px;font-family:'DejaVu Sans Mono','Liberation Mono','Noto Sans CJK SC',monospace;letter-spacing:-0.365px;white-space:pre;">        <span style="color:#8C8C8C;font-style:italic;">//</span><span style="color:#8C8C8C;">获取</span><span style="color:#8C8C8C;font-style:italic;">ResourceLoader</span><span style="color:#8C8C8C;">对象</span></span><span class="t" style="top:759.05px;font-size:32.5px;color:#080808;left:1594.00px;font-family:'DejaVu Sans Mono','Liberation Mono','Noto Sans CJK SC',monospace;letter-spacing:-0.365px;white-space:pre;">        ResourceLoader resourceLoader = testBean.getResourceLoader();</span><span class="t" style="top:813.05px;font-size:32.5px;color:#080808;left:1594.00px;font-family:'DejaVu Sans Mono','Liberation Mono','Noto Sans CJK SC',monospace;letter-spacing:-0.365px;white-space:pre;">        System.<span style="color:#871094;font-style:italic;">out</span>.println(<span style="color:#2E7D2C;">"Spring容器将自身注入到ResourceLoaderAware Bean 中 ？ ："</span> + (resourceLoader == ctx));</span><span class="t" style="top:867.05px;font-size:32.5px;color:#080808;left:1594.00px;font-family:'DejaVu Sans Mono','Liberation Mono','Noto Sans CJK SC',monospace;letter-spacing:-0.365px;white-space:pre;">        <span style="color:#8C8C8C;font-style:italic;">//</span><span style="color:#8C8C8C;">加载其他资源</span></span><span class="t" style="top:921.05px;font-size:32.5px;color:#080808;left:1594.00px;font-family:'DejaVu Sans Mono','Liberation Mono','Noto Sans CJK SC',monospace;letter-spacing:-0.365px;white-space:pre;">        Resource resource = resourceLoader.getResource(<span class="hint" style="width:135.4px;margin:0 1.7px 0 4.3px">location:</span><span style="color:#2E7D2C;">"codermast.txt"</span>);</span><span class="t" style="top:975.05px;font-size:32.5px;color:#080808;left:1594.00px;font-family:'DejaVu Sans Mono','Liberation Mono','Noto Sans CJK SC',monospace;letter-spacing:-0.365px;white-space:pre;">        System.<span style="color:#871094;font-style:italic;">out</span>.println(resource.getFilename());</span><span class="t" style="top:1029.06px;font-size:32.5px;color:#080808;left:1594.00px;font-family:'DejaVu Sans Mono','Liberation Mono','Noto Sans CJK SC',monospace;letter-spacing:-0.365px;white-space:pre;">        System.<span style="color:#871094;font-style:italic;">out</span>.println(resource.getDescription());</span><span class="t" style="top:1083.06px;font-size:32.5px;color:#080808;left:1594.00px;font-family:'DejaVu Sans Mono','Liberation Mono','Noto Sans CJK SC',monospace;letter-spacing:-0.365px;white-space:pre;">    }</span><span class="t" style="top:1137.06px;font-size:32.5px;color:#080808;left:1594.00px;font-family:'DejaVu Sans Mono','Liberation Mono','Noto Sans CJK SC',monospace;letter-spacing:-0.365px;white-space:pre;">}</span></div></div><svg style="left:2977px;top:296px;" width="40" height="40" viewBox="0 0 16 16" fill="none"><path stroke="#5FAD65" stroke-width="1.9" stroke-linecap="round" stroke-linejoin="round" d="M2.9 8.6l3.3 3.3 7-7.4"/></svg><div style="left:3008px;top:550px;width:17.5px;height:742px;background:rgba(0,0,0,.21);border-radius:9px;"></div><svg style="left:518.5px;top:106.3px;" width="40" height="40" viewBox="0 0 16 16" fill="none"><path stroke="#9DA0A8" stroke-width="1.1" stroke-linecap="round" stroke-linejoin="round" d="M4.5 6.5L8 10l3.5-3.5"/></svg><svg style="left:726px;top:106.3px;" width="40" height="40" viewBox="0 0 16 16" fill="none"><path stroke="#9DA0A8" stroke-width="1.1" stroke-linecap="round" stroke-linejoin="round" d="M4.5 6.5L8 10l3.5-3.5"/></svg><svg style="left:2382px;top:106.3px;" width="40" height="40" viewBox="0 0 16 16" fill="none"><path stroke="#9DA0A8" stroke-width="1.1" stroke-linecap="round" stroke-linejoin="round" d="M4.5 6.5L8 10l3.5-3.5"/></svg><svg style="left:598px;top:106.4px;" width="40" height="40" viewBox="0 0 16 16" fill="none"><g stroke="#CED0D6" stroke-width="1.1" stroke-linecap="round"><circle cx="5.3" cy="4.1" r="1.9"/><circle cx="11" cy="6.1" r="1.75"/><path d="M5.3 6.1v8.6M5.3 11.2h1.6a4 4 0 0 0 4-3.3"/></g></svg><svg style="left:2209px;top:101px;" width="50" height="50" viewBox="0 0 20 20" fill="none"><rect x="3.2" y="4.4" width="13.6" height="11.4" rx="1.8" fill="#25293D" stroke="#3B5795" stroke-width="1.1"/><path stroke="#4C69A8" stroke-width="1" d="M5.4 7.2h1.5M8 7.2h1.5"/></svg><svg style="left:2464px;top:101px;" width="50" height="50" viewBox="0 0 20 20" fill="none"><path stroke="#6DAE6C" stroke-width="1.5" stroke-linejoin="round" d="M4.5 4.800v10.400a.9.9 0 0 0 1.350.780l9.300-5.200a.9.9 0 0 0 0-1.560L5.850 4.020a.9.9 0 0 0-1.350.780z"/></svg><svg style="left:2551px;top:101px;" width="50" height="50" viewBox="0 0 20 20" fill="none"><g stroke="#6DAE6C" stroke-width="1.5" stroke-linecap="round" stroke-linejoin="round"><path d="M6.050 9.600a3 3 0 0 1 3-3h1.900a3 3 0 0 1 3 3v2.500a3.950 3.950 0 0 1-7.900 0z"/><path d="M7.900 6.600V5.900a2.100 2.350 0 0 1 4.200 0v.7"/><path d="M6.050 11H3.150M13.950 11h2.900M6.050 8.200L3.400 6.500M13.950 8.200l2.650-1.700M6.050 13.900l-2.650 1.700M13.950 13.900l2.650 1.700"/></g></svg><div style="left:2660.5px;top:109.2px;width:7px;height:7px;background:#E4E5EA;border-radius:3.5px;"></div><div style="left:2660.5px;top:122.6px;width:7px;height:7px;background:#E4E5EA;border-radius:3.5px;"></div><div style="left:2660.5px;top:136.1px;width:7px;height:7px;background:#E4E5EA;border-radius:3.5px;"></div><svg style="left:2863px;top:101px;" width="50" height="50" viewBox="0 0 20 20" fill="none"><g stroke="#CED0D6" stroke-width="1.5" stroke-linecap="round" stroke-linejoin="round"><circle cx="8.820" cy="4.540" r="3.250"/><path d="M8.700 16.500H3.300C3.300 13 5.600 10.400 8.900 10.400C10.200 10.400 11.300 10.800 12.200 11.500M14.600 12.100V18.600M11.300 15.350H18"/></g></svg><svg style="left:2961px;top:101px;" width="50" height="50" viewBox="0 0 20 20" fill="none"><g stroke="#CED0D6" stroke-width="1.5" stroke-linecap="round"><circle cx="8.640" cy="8.680" r="6.300"/><path d="M13.200 13.250l4.350 4.250"/></g></svg><svg style="left:3060px;top:101px;" width="50" height="50" viewBox="0 0 20 20" fill="none"><g stroke="#CED0D6" stroke-width="1.5" stroke-linejoin="round"><path d="M8.22 1.93Q8.62 1.24 9.42 1.24L10.62 1.24Q11.42 1.24 11.82 1.93L12.73 3.55Q13.12 4.25 13.92 4.24L15.78 4.22Q16.58 4.21 16.98 4.91L17.58 5.95Q17.98 6.64 17.57 7.33L16.63 8.93Q16.22 9.62 16.63 10.31L17.57 11.91Q17.98 12.60 17.58 13.29L16.98 14.33Q16.58 15.03 15.78 15.02L13.92 15.00Q13.12 14.99 12.73 15.69L11.82 17.31Q11.42 18.00 10.62 18.00L9.42 18.00Q8.62 18.00 8.22 17.31L7.31 15.69Q6.92 14.99 6.12 15.00L4.26 15.02Q3.46 15.03 3.06 14.33L2.46 13.29Q2.06 12.60 2.47 11.91L3.41 10.31Q3.82 9.62 3.41 8.93L2.47 7.33Q2.06 6.64 2.46 5.95L3.06 4.91Q3.46 4.21 4.26 4.22L6.12 4.24Q6.92 4.25 7.31 3.55z"/><circle cx="10.02" cy="9.62" r="2.85"/></g></svg><svg style="left:3060px;top:203px;overflow:visible;" width="50" height="50" viewBox="0 0 20 20" fill="none"><g stroke="#6C707E" stroke-width="1.5" stroke-linecap="round" stroke-linejoin="round"><path d="M11.300 1.600A4.600 4.600 0 0 0 5.300 5.950V9.700L3.100 14a.35.35 0 0 0 .3.5H16.600a.35.35 0 0 0 .3-.5L14.450 9.700V7.900"/><path fill="#6C707E" stroke="none" d="M7.800 17.200h4.300a2.150 1.700 0 0 1-4.300 0z"/></g><circle cx="16.560" cy="3" r="3.600" fill="#5B86EC"/></svg><svg style="left:3060px;top:302px;" width="50" height="50" viewBox="0 0 20 20" fill="none"><g stroke="#6C707E" stroke-width="1.4" stroke-linecap="round"><path d="M3.430 3.740C5.500 2.800 7.200 2.650 8.850 2.650C13.500 2.650 17.200 5.400 17.200 8.850C17.200 11.800 14.800 13.740 11.640 13.740C8.800 13.740 6.600 12.600 6.600 10.900C6.600 9.800 7.600 9.100 8.700 9.100C9.300 9.100 9.800 9.200 10.250 9.350"/><path d="M16.570 16.260C14.500 17.200 12.800 17.350 11.150 17.350C6.500 17.350 2.800 14.600 2.800 11.150C2.800 8.200 5.200 6.260 8.360 6.260C11.200 6.260 13.400 7.400 13.400 9.100C13.400 10.200 12.400 10.900 11.300 10.900C10.700 10.900 10.200 10.800 9.750 10.650"/></g></svg><svg style="left:3060px;top:401.5px;" width="50" height="50" viewBox="0 0 20 20" fill="none"><g stroke="#6C707E" stroke-width="1.5"><ellipse cx="10.050" cy="3.700" rx="7.350" ry="2.050"/><path d="M2.700 3.700v12.800c0 1.130 3.300 2.050 7.350 2.050s7.350-.920 7.350-2.050V3.700M2.700 7.970c0 1.130 3.300 2.050 7.350 2.050s7.350-.920 7.350-2.050M2.700 12.230c0 1.130 3.300 2.050 7.350 2.050s7.350-.920 7.350-2.050"/></g></svg><svg style="left:3059.4px;top:501.4px;" width="51.2" height="51.2" viewBox="0 0 16 16" fill="none"><text x="8.100" y="13.150" text-anchor="middle" font-family="Liberation Sans,sans-serif" font-style="italic" font-size="18.600" textLength="15.4" lengthAdjust="spacingAndGlyphs" fill="#6C707E" stroke="none">m</text></svg><span class="t" style="letter-spacing:0.600px;top:1388.26px;font-size:31px;color:#000;left:244.80px;font-weight:700;">运行</span><svg style="left:378px;top:1398px;" width="40" height="40" viewBox="0 0 16 16" fill="none"><g stroke="#6C707E" stroke-width="1" stroke-linecap="round" stroke-linejoin="round"><rect x="1.5" y="2.5" width="13" height="11" rx="1.8" fill="#E7EEFD" stroke="#9DB5F3"/><path stroke="#8FA9EE" stroke-width="1" stroke-linecap="butt" d="M3.6 5.4h1.5M6 5.4h1.5"/></g></svg><span class="t" style="letter-spacing:-0.250px;top:1388.57px;font-size:33px;color:#000;left:425.50px;">Demo3</span><svg style="left:552px;top:1398px;" width="40" height="40" viewBox="0 0 16 16" fill="none"><g stroke="#818594" stroke-width="1.1" stroke-linecap="round" stroke-linejoin="round"><path d="M4.4 4.4l7.2 7.2M11.6 4.4l-7.2 7.2"/></g></svg><div style="left:348px;top:1462px;width:262px;height:7.5px;background:#4571E6;border-radius:3.75px;"></div><div style="left:2909.3px;top:1400.6px;width:5.4px;height:5.4px;background:#6C707E;border-radius:2.7px;"></div><div style="left:2909.3px;top:1413.3px;width:5.4px;height:5.4px;background:#6C707E;border-radius:2.7px;"></div><div style="left:2909.3px;top:1425.8px;width:5.4px;height:5.4px;background:#6C707E;border-radius:2.7px;"></div><div style="left:2963.5px;top:1414.6px;width:33px;height:2.8px;background:#6C707E;border-radius:1.4px;"></div><svg style="left:228px;top:1494.4px;" width="40" height="40" viewBox="0 0 16 16" fill="none"><g stroke-linecap="round" stroke-linejoin="round" stroke-width="1.1"><path stroke="#5A5D6B" d="M12.1 5.5A5.45 5.45 0 1 0 7.9 13.15M13 1.700V5.500H9.200"/><path fill="#F2FCF3" stroke="#3E8E43" d="M8.750 9.200v5.400a.7.7 0 0 0 1.050.6l4.600-2.700a.7.7 0 0 0 0-1.200l-4.600-2.700a.7.7 0 0 0-1.050.6z"/></g></svg><div style="left:300.9px;top:1498.8px;width:30px;height:30px;background:#D0D0D2;border-radius:4.5px;box-sizing:border-box;border:1.5px solid #C6C6C9;"></div><div style="left:358.5px;top:1490.5px;width:1.5px;height:45px;background:#DCDDE2;"></div><svg style="left:384px;top:1494.4px;" width="40" height="40" viewBox="0 0 16 16" fill="none"><g stroke="#C4C5C9" stroke-width="1.1" stroke-linejoin="round"><path d="M2.850 4.800h1.750l1.050-1.900a.8.8 0 0 1 .7-.4h3.200a.8.8 0 0 1 .7.4l1.050 1.900h1.750a1.300 1.300 0 0 1 1.300 1.300v5.700a1.300 1.300 0 0 1-1.300 1.300H2.850a1.300 1.300 0 0 1-1.300-1.300V6.100a1.300 1.300 0 0 1 1.300-1.300z"/><circle cx="7.900" cy="8.700" r="2.250"/></g><circle cx="12.450" cy="6.500" r=".6" fill="#C4C5C9"/></svg><svg style="left:453.6px;top:1494.4px;" width="40" height="40" viewBox="0 0 16 16" fill="none"><g stroke="#C4C5C9" stroke-width="1.1" stroke-linecap="round" stroke-linejoin="round"><path d="M3.900 5.700V2.900a1.300 1.300 0 0 1 1.300-1.300h7.100a1.300 1.300 0 0 1 1.300 1.300v9.900a1.300 1.300 0 0 1-1.300 1.300H5.200a1.300 1.300 0 0 1-1.300-1.300V9.800M2.150 7.760h8.200M8.800 6.100l1.650 1.660L8.800 9.420"/></g></svg><svg style="left:520.5px;top:1494.4px;overflow:visible;" width="40" height="40" viewBox="0 0 16 16" fill="none"><g stroke="#C4C5C9" stroke-width="1.1" stroke-linecap="round" stroke-linejoin="round"><path d="M1.770 13.100A6.800 6.800 0 1 1 13.830 13.100z"/><circle cx="7.680" cy="9.500" r="1"/><path d="M8.450 8.800l3.250-2.400"/></g><path fill="#C4C5C9" d="M16.500 12.850v3.600h-3.750z"/></svg><div style="left:605.3px;top:1498.8px;width:5.4px;height:5.4px;background:#6C707E;border-radius:2.7px;"></div><div style="left:605.3px;top:1511.2px;width:5.4px;height:5.4px;background:#6C707E;border-radius:2.7px;"></div><div style="left:605.3px;top:1523.8px;width:5.4px;height:5.4px;background:#6C707E;border-radius:2.7px;"></div><svg style="left:237px;top:1579px;" width="50" height="50" viewBox="0 0 20 20" fill="none"><path stroke="#B4B8C2" stroke-width="1.200" stroke-linecap="round" stroke-linejoin="round" d="M10 16V4.300M5.600 8.700L10 4.300l4.400 4.400"/></svg><svg style="left:237px;top:1646.5px;" width="50" height="50" viewBox="0 0 20 20" fill="none"><path stroke="#B4B8C2" stroke-width="1.200" stroke-linecap="round" stroke-linejoin="round" d="M10 4v11.700M5.600 11.300l4.400 4.400 4.400-4.400"/></svg><svg style="left:237px;top:1717px;" width="50" height="50" viewBox="0 0 20 20" fill="none"><path stroke="#6C707E" stroke-width="1.200" stroke-linecap="round" stroke-linejoin="round" d="M3 4.800h14M3 9.800h11.200a2.600 2.600 0 0 1 0 5.200H10.600M12.800 12.800L10.600 15l2.200 2.200M3 15h4"/></svg><svg style="left:242px;top:1836px;" width="40" height="40" viewBox="0 0 16 16" fill="none"><path stroke="#6C707E" stroke-width="1.1" stroke-linecap="round" stroke-linejoin="round" d="M6 4l4 4-4 4"/></svg><div style="left:348px;top:1558px;width:1689px;height:54px;background:#EAF3E7;"></div><span class="t" style="top:1558.06px;font-size:32.5px;color:#454F45;left:348.50px;font-family:'DejaVu Sans Mono','Liberation Mono','Noto Sans CJK SC',monospace;letter-spacing:-0.365px;white-space:pre;">/Users/codermast/Library/Java/JavaVirtualMachines/azul-19.0.2/Contents/Home/bin/java ...</span><span class="t" style="top:1612.06px;font-size:32.5px;color:#000;left:348.50px;font-family:'DejaVu Sans Mono','Liberation Mono','Noto Sans CJK SC',monospace;letter-spacing:-0.365px;white-space:pre;">Spring容器将自身注入到ResourceLoaderAware Bean 中 ？ ：true</span><span class="t" style="top:1666.06px;font-size:32.5px;color:#000;left:348.50px;font-family:'DejaVu Sans Mono','Liberation Mono','Noto Sans CJK SC',monospace;letter-spacing:-0.365px;white-space:pre;">codermast.txt</span><span class="t" style="top:1720.06px;font-size:32.5px;color:#000;left:348.50px;font-family:'DejaVu Sans Mono','Liberation Mono','Noto Sans CJK SC',monospace;letter-spacing:-0.365px;white-space:pre;">class path resource [codermast.txt]</span><span class="t" style="top:1828.06px;font-size:32.5px;color:#00007F;left:348.50px;font-family:'DejaVu Sans Mono','Liberation Mono','Noto Sans CJK SC',monospace;letter-spacing:-0.365px;white-space:pre;">进程已结束，退出代码为 0</span><svg style="left:138px;top:1908px;" width="40" height="40" viewBox="0 0 16 16" fill="none"><g stroke="#6C707E" stroke-width="1" stroke-linecap="round" stroke-linejoin="round"><rect x="4.500" y="4.500" width="7" height="7" rx="1.600" fill="#E7EEFD" stroke="#3D6FE8"/></g></svg><span class="t" style="letter-spacing:0.033px;top:1896.87px;font-size:33px;color:#6C707E;left:178.20px;">Spring6</span><svg style="left:303px;top:1906.1px;" width="40" height="40" viewBox="0 0 16 16" fill="none"><path stroke="#818594" stroke-width="1.1" stroke-linecap="round" stroke-linejoin="round" d="M6.200 4.750L9.800 8l-3.600 3.250"/></svg><svg style="left:344px;top:1908px;" width="40" height="40" viewBox="0 0 16 16" fill="none"><g stroke="#6C707E" stroke-width="1" stroke-linecap="round" stroke-linejoin="round"><rect x="4.500" y="4.500" width="7" height="7" rx="1.600" fill="#E7EEFD" stroke="#3D6FE8"/></g></svg><span class="t" style="letter-spacing:0.300px;top:1896.87px;font-size:33px;color:#6C707E;left:384.50px;">spring6-resources</span><svg style="left:663.5px;top:1906.1px;" width="40" height="40" viewBox="0 0 16 16" fill="none"><path stroke="#818594" stroke-width="1.1" stroke-linecap="round" stroke-linejoin="round" d="M6.200 4.750L9.800 8l-3.600 3.250"/></svg><span class="t" style="letter-spacing:0.500px;top:1896.87px;font-size:33px;color:#6C707E;left:714.00px;">src</span><svg style="left:769px;top:1906.1px;" width="40" height="40" viewBox="0 0 16 16" fill="none"><path stroke="#818594" stroke-width="1.1" stroke-linecap="round" stroke-linejoin="round" d="M6.200 4.750L9.800 8l-3.600 3.250"/></svg><span class="t" style="letter-spacing:0.000px;top:1896.87px;font-size:33px;color:#6C707E;left:819.00px;">main</span><svg style="left:899.5px;top:1906.1px;" width="40" height="40" viewBox="0 0 16 16" fill="none"><path stroke="#818594" stroke-width="1.1" stroke-linecap="round" stroke-linejoin="round" d="M6.200 4.750L9.800 8l-3.600 3.250"/></svg><span class="t" style="letter-spacing:-1.133px;top:1896.87px;font-size:33px;color:#6C707E;left:948.60px;">java</span><svg style="left:1019px;top:1906.1px;" width="40" height="40" viewBox="0 0 16 16" fill="none"><path stroke="#818594" stroke-width="1.1" stroke-linecap="round" stroke-linejoin="round" d="M6.200 4.750L9.800 8l-3.600 3.250"/></svg><span class="t" style="letter-spacing:0.900px;top:1896.87px;font-size:33px;color:#6C707E;left:1069.80px;">com</span><svg style="left:1143px;top:1906.1px;" width="40" height="40" viewBox="0 0 16 16" fill="none"><path stroke="#818594" stroke-width="1.1" stroke-linecap="round" stroke-linejoin="round" d="M6.200 4.750L9.800 8l-3.600 3.250"/></svg><span class="t" style="letter-spacing:0.125px;top:1896.87px;font-size:33px;color:#6C707E;left:1194.00px;">codermast</span><svg style="left:1359px;top:1906.1px;" width="40" height="40" viewBox="0 0 16 16" fill="none"><path stroke="#818594" stroke-width="1.1" stroke-linecap="round" stroke-linejoin="round" d="M6.200 4.750L9.800 8l-3.600 3.250"/></svg><span class="t" style="letter-spacing:0.400px;top:1896.87px;font-size:33px;color:#6C707E;left:1410.00px;">spring</span><svg style="left:1511px;top:1906.1px;" width="40" height="40" viewBox="0 0 16 16" fill="none"><path stroke="#818594" stroke-width="1.1" stroke-linecap="round" stroke-linejoin="round" d="M6.200 4.750L9.800 8l-3.600 3.250"/></svg><svg style="left:1561.8px;top:1906px;" width="40" height="40" viewBox="0 0 16 16" fill="none"><g stroke="#6C707E" stroke-width="1" stroke-linecap="round" stroke-linejoin="round"><circle cx="8" cy="8" r="6.5" fill="#E7EEFD" stroke="#3D6FE8"/><text x="8.05" y="11.35" text-anchor="middle" font-family="Liberation Sans,sans-serif" font-size="9.4" fill="#3D6FE8" stroke="#3D6FE8" stroke-width=".12">C</text></g></svg><span class="t" style="letter-spacing:-0.100px;top:1896.87px;font-size:33px;color:#6C707E;left:1611.40px;">Demo3</span><svg style="left:1727px;top:1906.1px;" width="40" height="40" viewBox="0 0 16 16" fill="none"><path stroke="#818594" stroke-width="1.1" stroke-linecap="round" stroke-linejoin="round" d="M6.200 4.750L9.800 8l-3.600 3.250"/></svg><svg style="left:1778px;top:1906px;" width="40" height="40" viewBox="0 0 16 16" fill="none"><g stroke="#6C707E" stroke-width="1" stroke-linecap="round" stroke-linejoin="round"><circle cx="8" cy="8" r="6.500" fill="#FDF3F3" stroke="#CC3645"/><text x="8" y="10.750" text-anchor="middle" font-family="Liberation Sans,sans-serif" font-size="9.800" fill="#CC3645" stroke="#CC3645" stroke-width=".1">m</text></g></svg><span class="t" style="letter-spacing:0.067px;top:1896.87px;font-size:33px;color:#6C707E;left:1827.20px;">main</span><span class="t" style="letter-spacing:0.150px;top:1898.37px;font-size:33px;color:#6C707E;left:2474.50px;">16:32</span><span class="t" style="letter-spacing:-2.000px;top:1898.37px;font-size:33px;color:#6C707E;left:2594.60px;">LF</span><span class="t" style="letter-spacing:0.700px;top:1898.37px;font-size:33px;color:#6C707E;left:2671.20px;">UTF-8</span><svg style="left:2807px;top:1909px;" width="38" height="38" viewBox="0 0 20 20" fill="none"><g stroke="#6C707E" stroke-width="1.45" stroke-linecap="round"><path d="M3.430 3.740C5.500 2.800 7.200 2.650 8.850 2.650C13.500 2.650 17.200 5.400 17.200 8.850C17.200 11.800 14.800 13.740 11.640 13.740C8.800 13.740 6.600 12.600 6.600 10.900C6.600 9.800 7.600 9.100 8.700 9.100C9.300 9.100 9.800 9.200 10.250 9.350"/><path d="M16.570 16.260C14.500 17.200 12.800 17.350 11.150 17.350C6.500 17.350 2.800 14.600 2.800 11.150C2.800 8.200 5.200 6.260 8.360 6.260C11.200 6.260 13.400 7.400 13.400 9.100C13.400 10.200 12.400 10.900 11.300 10.900C10.700 10.900 10.200 10.800 9.750 10.650"/></g><path stroke="#F7F8FA" stroke-width="4" d="M17.600 2.400L2.400 17.600"/><path stroke="#6C707E" stroke-width="1.45" stroke-linecap="round" d="M18.100 1.900L1.900 18.100"/></svg><span class="t" style="letter-spacing:-0.300px;top:1898.54px;font-size:32.5px;color:#6C707E;left:2886.70px;">4 个空格</span><svg style="left:3053.5px;top:1906px;" width="40" height="40" viewBox="0 0 16 16" fill="none"><g stroke="#6C707E" stroke-width="1.1" stroke-linecap="round"><rect x="2.200" y="7.600" width="8.700" height="6.600" rx="1.500"/><path d="M9.150 7.500V5.850a2.250 2.250 0 0 1 4.500 0V7.200M6.600 9.900v2.200"/></g></svg></div></div></body></html>
